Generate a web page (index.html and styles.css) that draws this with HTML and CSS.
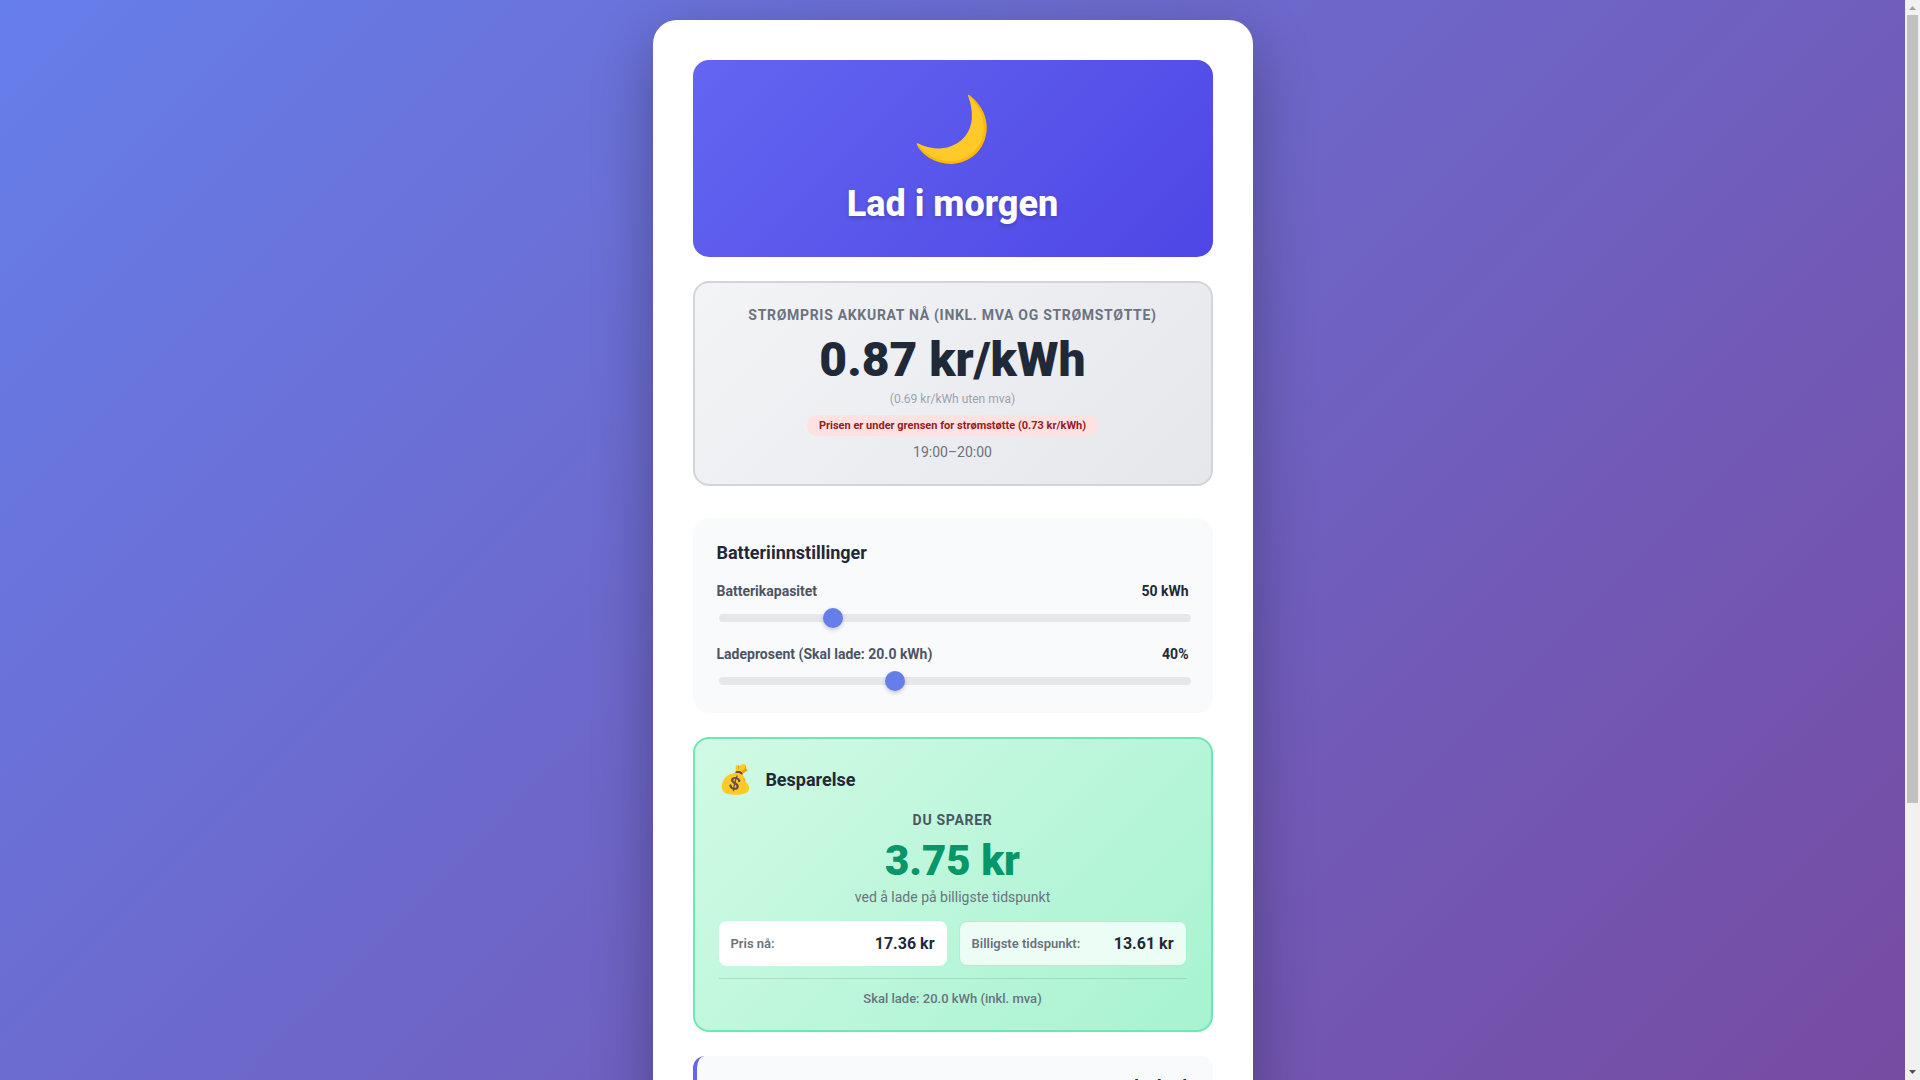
FILE: index.html
```
<!DOCTYPE html>
<html lang="no">
<head>
    <meta charset="UTF-8">
    <meta name="viewport" content="width=device-width, initial-scale=1.0">
    <title>Lad i morgen</title>
    <link rel="stylesheet" href="styles.css">
</head>
<body>
<div class="page">
    <main class="container">
        <header class="status">
            <div class="status-icon">🌙</div>
            <h1 class="status-text">Lad i morgen</h1>
        </header>

        <section class="current-price">
            <div class="price-label">Strømpris akkurat nå (inkl. mva og strømstøtte)</div>
            <div class="price-value">0.87 kr/kWh</div>
            <div class="price-excl">(0.69 kr/kWh uten mva)</div>
            <div class="price-badge">Prisen er under grensen for strømstøtte (0.73 kr/kWh)</div>
            <div class="price-time">19:00–20:00</div>
        </section>

        <section class="settings">
            <h2 class="section-title">Batteriinnstillinger</h2>
            <div class="setting">
                <div class="setting-row">
                    <label for="capacity">Batterikapasitet</label>
                    <output class="setting-value" for="capacity">50 kWh</output>
                </div>
                <input type="range" class="slider" id="capacity" min="20" max="150" value="50">
            </div>
            <div class="setting">
                <div class="setting-row">
                    <label for="percent">Ladeprosent (Skal lade: 20.0 kWh)</label>
                    <output class="setting-value" for="percent">40%</output>
                </div>
                <input type="range" class="slider" id="percent" min="5" max="100" value="40">
            </div>
        </section>

        <section class="savings">
            <div class="savings-header">
                <span class="savings-icon">💰</span>
                <h2 class="section-title">Besparelse</h2>
            </div>
            <div class="savings-label">Du sparer</div>
            <div class="savings-amount">3.75 kr</div>
            <div class="savings-text">ved å lade på billigste tidspunkt</div>
            <div class="compare">
                <div class="compare-item">
                    <span class="compare-label">Pris nå:</span>
                    <span class="compare-value">17.36 kr</span>
                </div>
                <div class="compare-item best">
                    <span class="compare-label">Billigste tidspunkt:</span>
                    <span class="compare-value">13.61 kr</span>
                </div>
            </div>
            <div class="savings-footer">Skal lade: 20.0 kWh (inkl. mva)</div>
        </section>

        <section class="details">
            <div class="detail-row">
                <span class="detail-value">kr/kWh</span>
            </div>
        </section>
    </main>
</div>
<div class="scrollbar" aria-hidden="true">
    <svg class="scroll-arrow" viewBox="0 0 15 15"><path d="M4 10h7L7.500 6z" fill="#a3a3a3"/></svg>
    <div class="scroll-track"><div class="scroll-thumb"></div></div>
    <svg class="scroll-arrow" viewBox="0 0 15 15"><path d="M4 5h7L7.500 9z" fill="#505050"/></svg>
</div>
</body>
</html>
```
FILE: styles.css
```
* {
    margin: 0;
    padding: 0;
    box-sizing: border-box;
}

body {
    font-family: Roboto, "Noto Color Emoji", sans-serif;
    line-height: 1.2;
    display: grid;
    grid-template-columns: 1fr 15px;
    height: 100vh;
    overflow: hidden;
}

.page {
    background: linear-gradient(135deg, #667eea 0%, #764ba2 100%);
    height: 100vh;
    overflow-y: auto;
    scrollbar-width: none;
    padding: 20px;
}

/* Scrollbar */
.scrollbar {
    display: flex;
    flex-direction: column;
    height: 100vh;
    background: #f1f1f1;
}

.scroll-arrow {
    display: block;
    width: 15px;
    height: 15px;
}

.scroll-track {
    flex: 1;
    padding: 0 2px;
}

.scroll-thumb {
    height: 75%;
    background: #c1c1c1;
}

.container {
    background: #fff;
    max-width: 600px;
    margin: 0 auto;
    padding: 40px;
    border-radius: 24px;
    box-shadow: 0 20px 60px rgba(0, 0, 0, 0.3);
}

.status {
    background: linear-gradient(135deg, #6366f1 0%, #4f46e5 100%);
    color: #fff;
    text-align: center;
    border-radius: 16px;
    padding: 32px;
    margin-bottom: 24px;
}

.status-icon {
    font-size: 64px;
    line-height: 75px;
    margin-bottom: 16px;
}

.status-text {
    font-size: 36px;
    line-height: 42px;
    font-weight: 800;
    text-shadow: 0 2px 4px rgba(0, 0, 0, 0.2);
}

.current-price {
    background: linear-gradient(135deg, #f3f4f6 0%, #e5e7eb 100%);
    border: 2px solid #d1d5db;
    border-radius: 16px;
    padding: 24px;
    margin-bottom: 32px;
    text-align: center;
}

.price-label {
    color: #6b7280;
    font-size: 14px;
    line-height: 16px;
    font-weight: 700;
    letter-spacing: 0.05em;
    text-transform: uppercase;
    margin-bottom: 8px;
}

.price-value {
    color: #1f2937;
    font-size: 48px;
    line-height: 57px;
    font-weight: 900;
    margin-bottom: 4px;
}

.price-excl {
    color: #9ca3af;
    font-size: 12px;
    line-height: 14px;
    margin-bottom: 8px;
}

.price-badge {
    display: inline-block;
    background: #fee2e2;
    color: #991b1b;
    font-size: 11px;
    line-height: 13px;
    font-weight: 700;
    padding: 4px 12px;
    border-radius: 12px;
    margin-bottom: 8px;
}

.price-time {
    color: #6b7280;
    font-size: 14px;
    line-height: 16px;
}

.settings {
    background: #f9fafb;
    border-radius: 16px;
    padding: 24px 24px 26px;
    margin-bottom: 24px;
}

.section-title {
    color: #1f2937;
    font-size: 18px;
    line-height: 21px;
    font-weight: 700;
}

.settings .section-title {
    margin-bottom: 20px;
}

.setting + .setting {
    margin-top: 24px;
}

.setting-row {
    display: flex;
    justify-content: space-between;
    color: #4b5563;
    font-size: 14px;
    line-height: 16px;
    font-weight: 700;
    margin-bottom: 15px;
}

.setting-value {
    color: #1f2937;
}

.slider {
    -webkit-appearance: none;
    appearance: none;
    display: block;
    width: 100%;
    height: 8px;
    margin: 2px;
    background: #e5e7eb;
    border-radius: 4px;
    outline: none;
}

.slider::-webkit-slider-thumb {
    -webkit-appearance: none;
    appearance: none;
    width: 20px;
    height: 20px;
    border-radius: 50%;
    background: #667eea;
    cursor: pointer;
    box-shadow: 0 2px 4px rgba(0, 0, 0, 0.2);
}

.savings {
    background: linear-gradient(135deg, #d1fae5 0%, #a7f3d0 100%);
    border: 2px solid #6ee7b7;
    border-radius: 16px;
    padding: 24px;
    margin-bottom: 24px;
    text-align: center;
}

.savings-header {
    display: flex;
    align-items: center;
    gap: 12px;
    margin-bottom: 16px;
}

.savings-icon {
    font-size: 28px;
    line-height: 33px;
}

.savings-label {
    color: #4b5563;
    font-size: 14px;
    line-height: 16px;
    font-weight: 700;
    letter-spacing: 0.05em;
    text-transform: uppercase;
    margin-bottom: 8px;
}

.savings-amount {
    color: #059669;
    font-size: 42px;
    line-height: 49px;
    font-weight: 900;
    margin-bottom: 4px;
}

.savings-text {
    color: #6b7280;
    font-size: 14px;
    line-height: 16px;
    margin-bottom: 16px;
}

.compare {
    display: grid;
    grid-template-columns: 1fr 1fr;
    gap: 12px;
    margin-bottom: 12px;
}

.compare-item {
    display: flex;
    justify-content: space-between;
    align-items: center;
    background: #fff;
    border-radius: 8px;
    padding: 12px;
}

.compare-item.best {
    background: #ecfdf5;
    border: 1px solid #a7f3d0;
}

.compare-label {
    color: #6b7280;
    font-size: 13px;
    font-weight: 600;
}

.compare-value {
    color: #1f2937;
    font-size: 16px;
    font-weight: 700;
}

.savings-footer {
    color: #6b7280;
    font-size: 13px;
    line-height: 15px;
    font-weight: 500;
    border-top: 1px solid rgba(0, 0, 0, 0.1);
    padding-top: 12px;
}

.details {
    background: #f9fafb;
    border-left: 4px solid #6366f1;
    border-radius: 12px;
    padding: 20px;
    min-height: 327px;
}

.detail-row {
    display: flex;
    justify-content: flex-end;
}

.detail-value {
    color: #1f2937;
    font-size: 18px;
    font-weight: 700;
}
```
